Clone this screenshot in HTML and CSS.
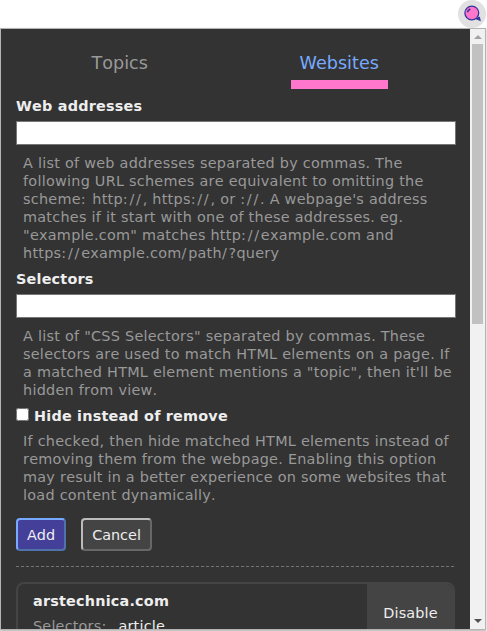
FILE: index.html
```html
<!DOCTYPE html>
<html lang="en">
<head>
<meta charset="utf-8">
<title>Websites</title>
<link rel="stylesheet" href="styles.css">
</head>
<body>
<header class="toolbar">
  <div class="extension">
    <svg width="18" height="18" viewBox="0 0 18 18">
      <path d="M11.5 13.5l4.5 1.8-.8-3.5" fill="#34349b" stroke="#34349b" stroke-width="1.3"/>
      <circle cx="7.8" cy="8" r="6.9" fill="#ff77cc" stroke="#34349b" stroke-width="1.3"/>
      <path d="M3.4 7.3C3.8 5.7 4.6 4.8 6.3 4" fill="none" stroke="#34349b" stroke-width="1.5"/>
    </svg>
  </div>
</header>
<div class="popup">
  <main class="content">
    <nav class="tabs">
      <div class="tab"><span class="tab-label">Topics</span></div>
      <div class="tab"><span class="tab-label active">Websites</span></div>
    </nav>
    <form class="form">
      <label class="label" for="addresses">Web addresses</label>
      <input class="field" id="addresses" type="text">
      <p class="help">A list of web addresses separated by commas. The<br>following URL schemes are equivalent to omitting the<br>scheme<span class="mark">:</span> http<span class="mark">://</span>, https<span class="mark">://</span>, or <span class="mark">://</span>. A webpage's address<br>matches if it start with one of these addresses. eg.<br>"example.com" matches http<span class="mark">://</span>example.com and<br>https<span class="mark">://</span>example.com<span class="mark">/</span>path<span class="mark">/</span>?query</p>
      <label class="label" for="selectors">Selectors</label>
      <input class="field" id="selectors" type="text">
      <p class="help">A list of "CSS Selectors" separated by commas. These<br>selectors are used to match HTML elements on a page. If<br>a matched HTML element mentions a "topic", then it'll be<br>hidden from view.</p>
      <label class="label check"><input class="checkbox" type="checkbox">Hide instead of remove</label>
      <p class="help">If checked, then hide matched HTML elements instead of<br>removing them from the webpage. Enabling this option<br>may result in a better experience on some websites that<br>load content dynamically.</p>
      <div class="actions">
        <button class="button primary" type="button">Add</button>
        <button class="button" type="button">Cancel</button>
      </div>
    </form>
    <svg class="divider" width="440" height="1"><path d="M0 .5H440" stroke="#747474" stroke-dasharray="3 2"/></svg>
    <article class="site">
      <div class="site-info">
        <h2 class="site-name">arstechnica.com</h2>
        <div class="site-row"><span class="site-key">Selectors:</span><span>article</span></div>
      </div>
      <button class="disable" type="button">Disable</button>
    </article>
  </main>
  <aside class="scrollbar">
    <span class="arrow up"></span>
    <span class="thumb"></span>
    <span class="arrow down"></span>
  </aside>
</div>
</body>
</html>
```

FILE: styles.css
```css
* { box-sizing: border-box; }
body {
  margin: 0;
  height: 631px;
  overflow: hidden;
  background: #fff;
  color: #eee;
  font: 14.4px/18px Verdana, "DejaVu Sans", sans-serif;
  font-kerning: none;
}
.toolbar { height: 28px; display: flex; justify-content: flex-end; padding-right: 1px; }
.extension {
  width: 28px;
  height: 28px;
  border-radius: 50%;
  background: #e1e1e1;
  padding: 5px 4px 5px 6px;
}
.extension svg { display: block; }
.popup {
  width: 486px;
  height: 602px;
  display: flex;
  border: 1px solid #b4b4b4;
  box-shadow: 0 1px 2px #aaa;
}
.content { width: 469px; height: 600px; padding: 0 15px; overflow: hidden; background: #333; }
.tabs { display: flex; height: 68px; padding-top: 15px; }
.tab { flex: 1; display: flex; justify-content: center; }
.tab:first-child { padding-right: 12px; }
.tab:last-child { padding-right: 12px; }
.tab-label { height: 45px; padding: 8px 9px 0; font-size: 17.6px; line-height: 22px; color: #999; }
.tab-label.active { color: #77aaff; border-bottom: 9px solid #ff77cc; font-kerning: normal; }
.form { margin: 0; }
.label { display: block; height: 18px; font-weight: bold; letter-spacing: .2px; white-space: nowrap; }
.field {
  display: block;
  width: 440px;
  height: 24px;
  margin: 6px 0 9px;
  padding: 2px;
  border: 1px solid #767676;
  background: #fff;
}
.help { margin: 0 0 8px; padding-left: 7px; color: #999; letter-spacing: .26px; white-space: nowrap; }
.mark { letter-spacing: 1.75px; }
.check { display: flex; align-items: center; gap: 5px; margin: 0 0 7px; }
.checkbox { width: 13px; height: 13px; margin: 0 0 3px; }
.actions { display: flex; gap: 15px; padding-top: 6px; }
.button {
  height: 33px;
  padding: 0 9px;
  border: 2px outset #bbb;
  border-radius: 4px;
  background: #444;
  color: #eee;
  font: inherit;
}
.button.primary { border-color: #77aaff; background: #443f99; }
.divider { display: block; margin: 15px 0; }
.site {
  display: flex;
  height: 62px;
  border: 2px solid #444;
  border-radius: 8px 8px 0 0;
  overflow: hidden;
}
.site-info { flex: 1; padding: 8px 15px; }
.site-name { margin: 0 0 7px; font-size: 14.4px; line-height: 18px; letter-spacing: .2px; }
.site-row { display: flex; gap: 12px; letter-spacing: .2px; }
.site-key { color: #999; }
.disable { width: 86px; border: 0; padding: 0 0 0 1px; background: #444; color: #eee; font: inherit; letter-spacing: .15px; }
.scrollbar { width: 15px; display: flex; flex-direction: column; align-items: center; background: #f1f1f1; }
.arrow { border: 4px solid transparent; width: 0; height: 0; }
.up { margin-top: 2px; border-bottom-color: #a3a3a3; }
.thumb { width: 11px; height: 280px; margin-top: 5px; background: #c1c1c1; }
.down { margin-top: auto; margin-bottom: 2px; border-top-color: #505050; }
```
